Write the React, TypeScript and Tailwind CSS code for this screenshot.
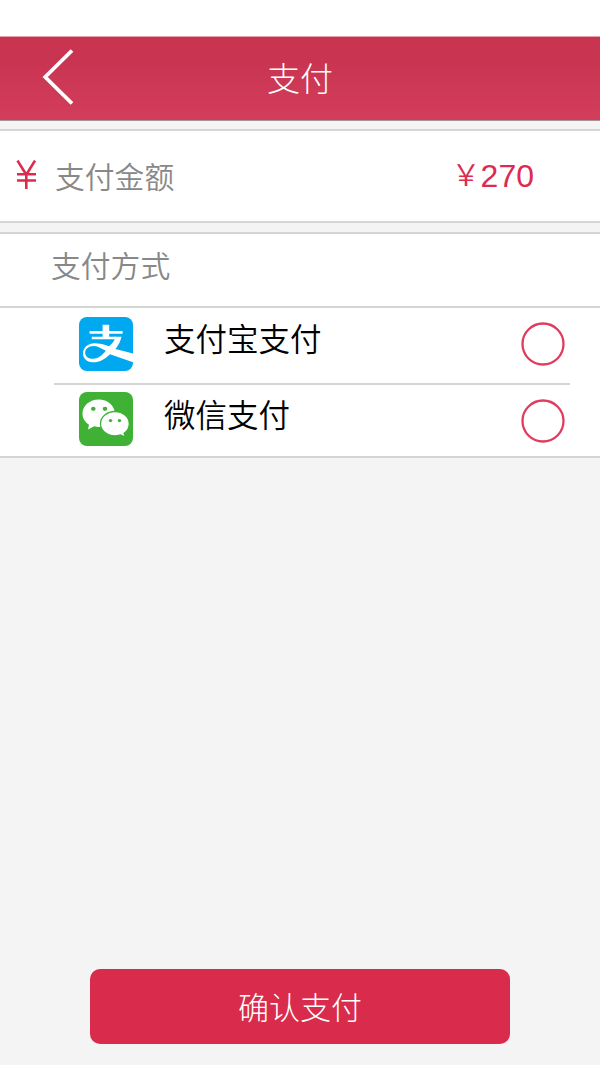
import React from "react";

const cjk = "font-['Liberation_Sans','Noto_Sans_CJK_SC',sans-serif]";

function BackIcon() {
  return (
    <svg width="34" height="58" viewBox="0 0 34 58" fill="none" stroke="#fff" strokeWidth="3.8" strokeLinejoin="miter">
      <path d="M31 2.500 4.200 29 31 55.500" />
    </svg>
  );
}

function YenIcon() {
  return (
    <svg width="21" height="29" viewBox="0 0 21 29" fill="none" stroke="#dc2b4f" strokeWidth="2.6">
      <path d="M1.500.6 10.300 14.800 19 .6M10.300 14V29M1 14.200h19M1 20.500h19" />
    </svg>
  );
}

function AlipayIcon() {
  return (
    <svg width="54" height="54" viewBox="0 0 54 54">
      <defs>
        <clipPath id="alipay-tile">
          <rect width="54" height="54" rx="8" />
        </clipPath>
      </defs>
      <g clipPath="url(#alipay-tile)">
        <rect width="54" height="54" fill="#00a8ef" />
        <path d="M10.600 14h33v2.800h-33zM23.600 7.800h6.600V21h-6.600zM12.800 19.800h24v2.400h-24z" fill="#fff" />
        <path d="M35 19.800h7.500c-1.200 5-3.200 8.700-6 12.200L55 36.800V45.500L31 37.200C25.500 42.500 19.500 45.700 13.500 45.300 7.500 44.900 3.800 41 4 36 4.300 30.500 9 26.200 15.500 26.200c5 0 9.500 1.200 14.500 3C33 27 34.500 24.800 35.800 22ZM26.800 33.800C22 31 18 28.900 14.500 29 9.500 29.200 6.200 32 6.200 35.700c0 3.900 3.300 6.100 7.800 6.100 5 0 9-3.200 12.800-8Z" fill="#fff" fillRule="evenodd" />
      </g>
    </svg>
  );
}

function WechatIcon() {
  return (
    <svg width="54" height="54" viewBox="0 0 54 54">
      <rect width="54" height="54" rx="8" fill="#3fb135" />
      <path d="M19.700 7.500C10.700 7.500 3.500 13.800 3.500 21.500c0 4.700 2.500 8.700 6.500 11.300L9 37.500l6.200-3.200c8 2.200 21.500-1.300 20.800-12.800C35.500 13.500 28.700 7.500 19.700 7.500Z" fill="#fff" />
      <path d="M36 19.500c7.900 0 14.300 5.500 14.300 12.300 0 4-2 7.400-5.200 9.500l1.200 3.800-4.900-2.200C32 46.400 21.500 40.500 21.500 31.800 21.500 25 28 19.500 36 19.500Z" fill="#fff" stroke="#3fb135" strokeWidth="1.3" />
      <g fill="#3fb135">
        <ellipse cx="14.300" cy="16.800" rx="2.300" ry="2.100" />
        <ellipse cx="26" cy="16.800" rx="2.300" ry="2.100" />
        <circle cx="31.500" cy="28.600" r="1.700" />
        <circle cx="40.500" cy="28.600" r="1.700" />
      </g>
    </svg>
  );
}

function Radio() {
  return (
    <svg width="44" height="44" viewBox="0 0 44 44" fill="none" stroke="#e03c5d" strokeWidth="2.3">
      <circle cx="22" cy="22" r="20.500" />
    </svg>
  );
}

export default function App() {
  return (
    <div className={`flex h-[1065px] w-[600px] flex-col bg-[#f4f4f4] font-[350] ${cjk}`}>
      <div className="h-9 shrink-0 bg-white" />
      <header className="grid h-[85px] shrink-0 grid-cols-[1fr_auto_1fr] items-center border-t border-b border-t-[#e6a0ae] border-b-[#a4939a] bg-linear-to-b from-[#c93551] from-30% to-[#d33d5c] text-white">
        <div className="pb-[3px] pl-[41px]">
          <BackIcon />
        </div>
        <h1 className="pt-0.5 text-[33px] leading-none font-light">支付</h1>
      </header>

      <section className="mt-2 flex h-[94px] shrink-0 items-center border-y-2 border-[#d5d5d5] bg-white pl-4">
        <div className="pb-[3px]">
          <YenIcon />
        </div>
        <span className="ml-[18px] pt-[3px] text-[29.800px] leading-none text-[#888]">支付金额</span>
        <div className="ml-auto flex items-center pr-[66px] text-[#dc2b4f]">
          <span className="text-[29px] leading-none">￥</span>
          <span className="text-[32px] leading-none">270</span>
        </div>
      </section>

      <section className="mt-[9px] h-[226px] shrink-0 border-y-2 border-[#d5d5d5] bg-white">
        <div className="h-[74px] border-b-2 border-[#d5d5d5] pt-[18px] pl-[51px] text-[29.800px] leading-none text-[#888]">支付方式</div>
        <div className="mr-[30px] ml-[54px] flex h-[77px] items-start border-b-2 border-[#d5d5d5] pt-[9px] pr-[5px] pl-[25px]">
          <AlipayIcon />
          <span className="ml-[31px] flex-1 pt-2 text-[31.500px] leading-none text-black">支付宝支付</span>
          <div className="pt-[5px]">
            <Radio />
          </div>
        </div>
        <div className="mr-[30px] ml-[54px] flex items-start pt-[7px] pr-[5px] pl-[25px]">
          <WechatIcon />
          <span className="ml-[31px] flex-1 pt-[9px] text-[31.500px] leading-none text-black">微信支付</span>
          <div className="pt-[7px]">
            <Radio />
          </div>
        </div>
      </section>

      <button type="button" className="mx-[90px] mt-auto mb-[21px] h-[75px] shrink-0 rounded-[10px] bg-[#d92b4c] pt-1 text-[31px] leading-none font-light text-white">
        确认支付
      </button>
    </div>
  );
}
